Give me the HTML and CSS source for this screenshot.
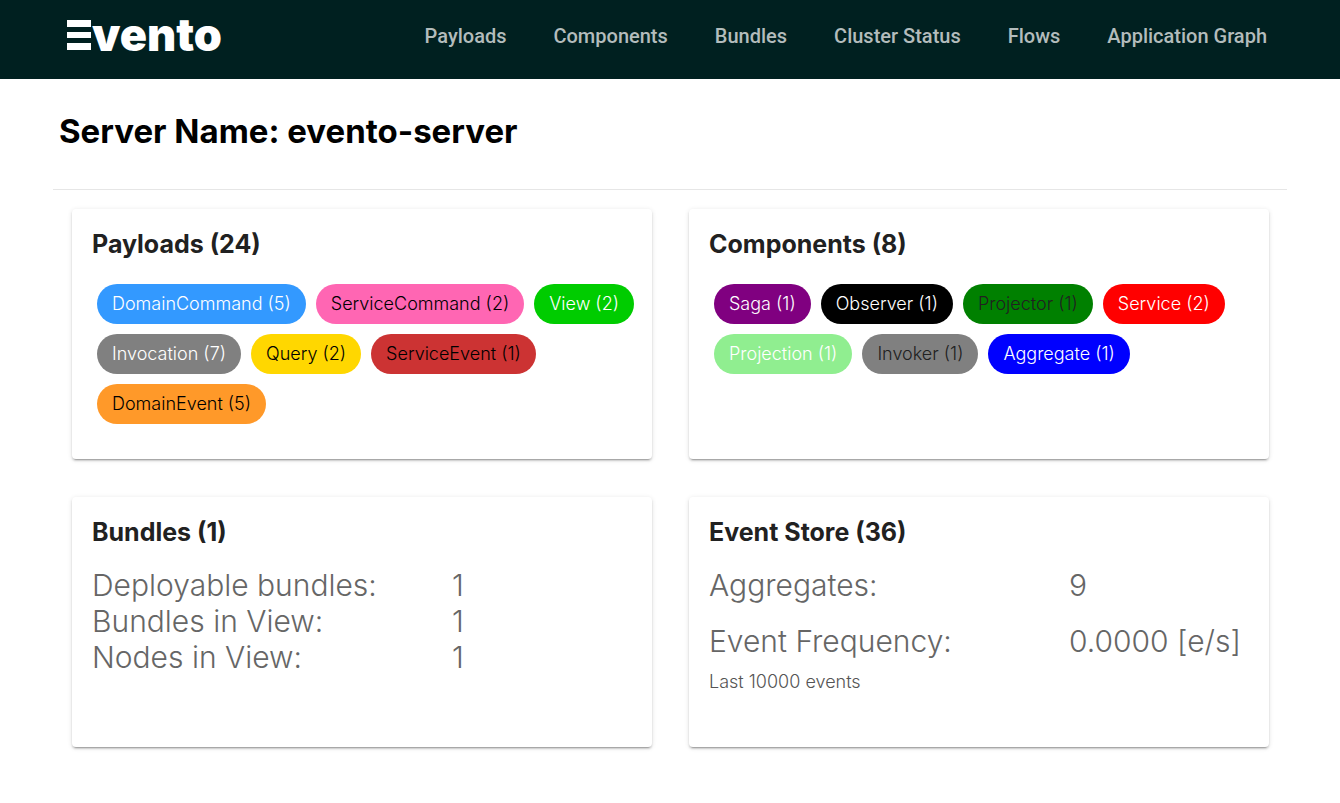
FILE: index.html
```html
<!DOCTYPE html>
<html lang="en">
<head>
<meta charset="utf-8">
<title>Evento</title>
<link rel="stylesheet" href="styles.css">
</head>
<body>
<header class="topbar">
  <a class="brand" href="#" aria-label="Evento"><svg class="brand-mark" viewBox="0 0 25 30" aria-hidden="true"><path d="M0 0H24V7H0ZM0 12H24V18H0ZM0 23H24V30H0Z"/></svg><span>vento</span></a>
  <nav class="nav">
    <a href="#">Payloads</a><a href="#">Components</a><a href="#">Bundles</a><a href="#">Cluster Status</a><a href="#">Flows</a><a href="#">Application Graph</a>
  </nav>
</header>
<main class="page">
  <h1 class="title">Server Name: evento-server</h1>
  <div class="grid">
    <section class="card">
      <h2>Payloads (24)</h2>
      <div class="chips">
        <span class="chip domain-command">DomainCommand (5)</span>
        <span class="chip service-command">ServiceCommand (2)</span>
        <span class="chip view">View (2)</span>
        <span class="chip invocation">Invocation (7)</span>
        <span class="chip query">Query (2)</span>
        <span class="chip service-event">ServiceEvent (1)</span>
        <span class="chip domain-event">DomainEvent (5)</span>
      </div>
    </section>
    <section class="card">
      <h2>Components (8)</h2>
      <div class="chips">
        <span class="chip saga">Saga (1)</span>
        <span class="chip observer">Observer (1)</span>
        <span class="chip projector">Projector (1)</span>
        <span class="chip service">Service (2)</span>
        <span class="chip projection">Projection (1)</span>
        <span class="chip invoker">Invoker (1)</span>
        <span class="chip aggregate">Aggregate (1)</span>
      </div>
    </section>
    <section class="card">
      <h2>Bundles (1)</h2>
      <dl class="stats">
        <dt>Deployable bundles:</dt><dd>1</dd>
        <dt>Bundles in View:</dt><dd>1</dd>
        <dt>Nodes in View:</dt><dd>1</dd>
      </dl>
    </section>
    <section class="card">
      <h2>Event Store (36)</h2>
      <dl class="stats spaced">
        <dt>Aggregates:</dt><dd>9</dd>
        <dt>Event Frequency:</dt><dd>0.0000 [e/s]</dd>
      </dl>
      <p class="note">Last 10000 events</p>
    </section>
  </div>
</main>
</body>
</html>
```
FILE: styles.css
```css
* { box-sizing: border-box; }
body { margin: 0; background: #fff; color: #212121; font-family: Inter, sans-serif; }
.topbar { display: flex; justify-content: space-between; height: 79px; padding: 0 73px 0 67px; background: #002020; }
.brand { display: flex; align-items: flex-start; padding-top: 20px; color: #fff; text-decoration: none; font: 900 45px/30px Inter, sans-serif; }
.brand-mark { width: 25px; height: 30px; fill: #fff; }
.nav { display: flex; gap: 47px; padding-top: 24px; }
.nav a { color: #b3bcbc; text-decoration: none; font: 500 20px/24px Roboto, sans-serif; }
.page { padding: 0 53px 40px; }
.title { margin: 0; padding: 32px 6px 37px; border-bottom: 1px solid #e6e6e6; color: #000; font-size: 33px; line-height: 41px; font-weight: 700; }
.grid { display: grid; grid-template-columns: 1fr 1fr; gap: 38px 37px; padding: 19px 18px 0 19px; }
.card { min-height: 250px; padding: 20px; border-radius: 4px; background: #fff; box-shadow: 0 3px 1px -2px rgba(0,0,0,.2), 0 2px 2px 0 rgba(0,0,0,.14), 0 1px 5px 0 rgba(0,0,0,.12); }
.card h2 { margin: 0; font-size: 25px; line-height: 30px; font-weight: 700; }
.chips { display: flex; flex-wrap: wrap; gap: 10px; margin: 25px -10px 0 5px; }
.chip { padding: 0 15px; border-radius: 20px; font-size: 18px; line-height: 40px; font-weight: 300; white-space: nowrap; color: #fff; }
.domain-command { background: #3399ff; }
.service-command { background: #ff66b3; color: #000; }
.view { background: #00cc00; }
.invocation { background: #808080; }
.query { background: #ffd700; color: #000; }
.service-event { background: #cc3333; color: #000; }
.domain-event { background: #ff9929; color: #000; }
.saga { background: #800080; }
.observer { background: #000; }
.projector { background: #008000; color: #212121; }
.service { background: #f00; }
.projection { background: #90ee90; }
.invoker { background: #808080; color: #212121; }
.aggregate { background: #00f; }
.stats { display: grid; grid-template-columns: 2fr 1fr; margin: 20px 0 0; color: #666; font-size: 30px; line-height: 36px; font-weight: 300; }
.stats dd { margin: 0; white-space: nowrap; }
.spaced { row-gap: 20px; }
.note { margin: 11px 0 0; color: #555; font-size: 18px; line-height: 24px; font-weight: 300; }
```
